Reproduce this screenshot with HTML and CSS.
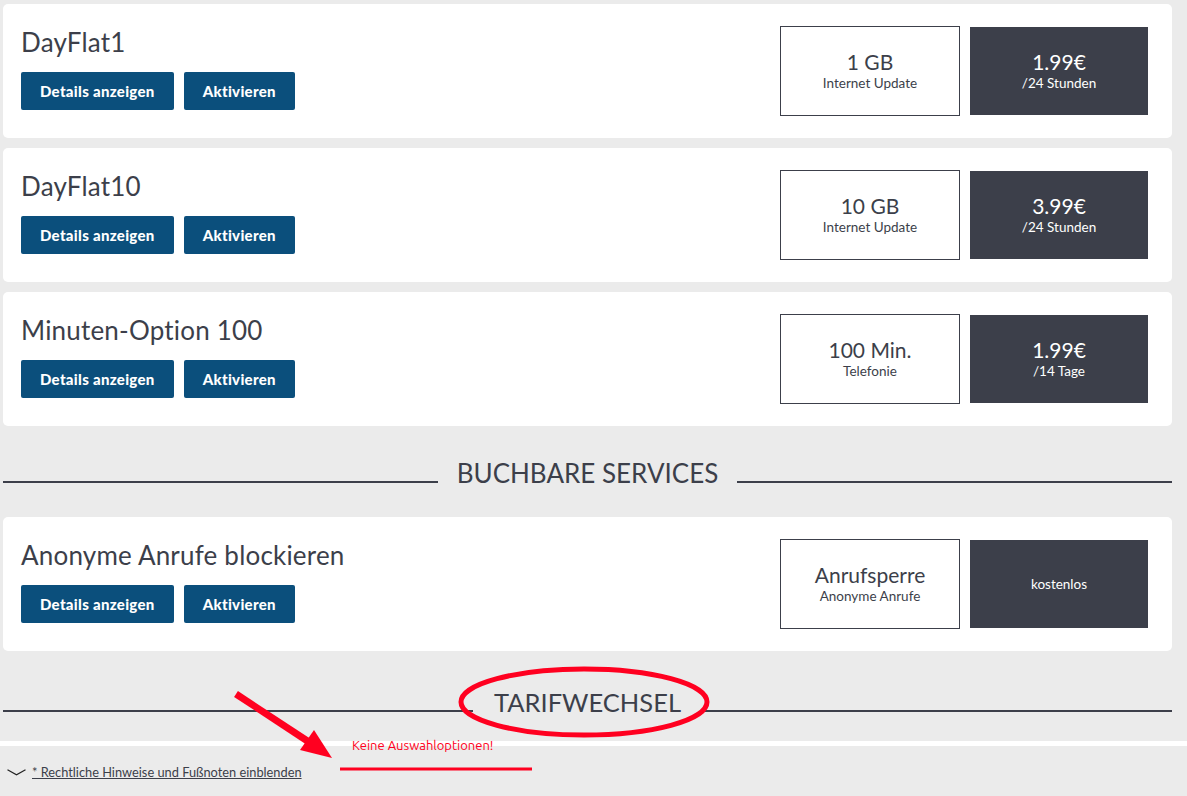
FILE: index.html
```html
<!DOCTYPE html>
<html lang="de">
<head>
<meta charset="utf-8">
<title>Optionen</title>
<link rel="stylesheet" href="styles.css">
</head>
<body>
<main class="page">
  <section class="list">
    <article class="card">
      <div class="card-main">
        <h2 class="card-title">DayFlat1</h2>
        <div class="actions"><button class="btn">Details anzeigen</button><button class="btn">Aktivieren</button></div>
      </div>
      <div class="boxes">
        <div class="box box-info"><span class="box-big">1 GB</span><span class="box-small">Internet Update</span></div>
        <div class="box box-price"><span class="box-big">1.99€</span><span class="box-small">/24 Stunden</span></div>
      </div>
    </article>
    <article class="card">
      <div class="card-main">
        <h2 class="card-title">DayFlat10</h2>
        <div class="actions"><button class="btn">Details anzeigen</button><button class="btn">Aktivieren</button></div>
      </div>
      <div class="boxes">
        <div class="box box-info"><span class="box-big">10 GB</span><span class="box-small">Internet Update</span></div>
        <div class="box box-price"><span class="box-big">3.99€</span><span class="box-small">/24 Stunden</span></div>
      </div>
    </article>
    <article class="card">
      <div class="card-main">
        <h2 class="card-title">Minuten-Option 100</h2>
        <div class="actions"><button class="btn">Details anzeigen</button><button class="btn">Aktivieren</button></div>
      </div>
      <div class="boxes">
        <div class="box box-info"><span class="box-big">100 Min.</span><span class="box-small">Telefonie</span></div>
        <div class="box box-price"><span class="box-big">1.99€</span><span class="box-small">/14 Tage</span></div>
      </div>
    </article>
  </section>

  <h2 class="divider divider-services"><span class="divider-line"></span><span class="divider-text">BUCHBARE SERVICES</span><span class="divider-line"></span></h2>

  <section class="list">
    <article class="card">
      <div class="card-main">
        <h2 class="card-title">Anonyme Anrufe blockieren</h2>
        <div class="actions"><button class="btn">Details anzeigen</button><button class="btn">Aktivieren</button></div>
      </div>
      <div class="boxes">
        <div class="box box-info"><span class="box-big">Anrufsperre</span><span class="box-small">Anonyme Anrufe</span></div>
        <div class="box box-price"><span class="box-small">kostenlos</span></div>
      </div>
    </article>
  </section>

  <h2 class="divider divider-tarif"><span class="divider-line"></span><span class="divider-text">TARIFWECHSEL</span><span class="divider-line"></span></h2>
</main>

<div class="strip"></div>

<footer class="footer">
  <svg class="chevron" width="19" height="7" viewBox="0 0 19 7"><polyline points="0.5,0.8 9.5,5.8 18.5,0.8" fill="none" stroke="#222" stroke-width="1.2"/></svg>
  <a class="legal-link" href="#">* Rechtliche Hinweise und Fußnoten einblenden</a>
</footer>

<svg class="annotation" width="1187" height="796" viewBox="0 0 1187 796">
  <ellipse cx="584" cy="702" rx="123" ry="33" fill="none" stroke="#ff0020" stroke-width="5"/>
  <line x1="236" y1="694" x2="312" y2="744" stroke="#ff0020" stroke-width="7"/>
  <polygon points="300,750 314,730 332,758" fill="#ff0020"/>
  <line x1="340" y1="769" x2="532" y2="769" stroke="#ff0020" stroke-width="3"/>
</svg>
<p class="annotation-text">Keine Auswahloptionen!</p>
</body>
</html>
```

FILE: styles.css
```css
* {
  box-sizing: border-box;
}

html, body {
  margin: 0;
  padding: 0;
}

body {
  background: #ebebeb;
  font-family: Lato, "Open Sans", sans-serif;
  color: #3c3f4a;
  width: 1187px;
  height: 796px;
  overflow: hidden;
  position: relative;
}

.page {
  margin-left: 3px;
  width: 1169px;
  padding-top: 4px;
}

.list {
  display: flex;
  flex-direction: column;
  gap: 10px;
}

.card {
  background: #fff;
  border-radius: 5px;
  height: 134px;
  padding: 23px 24px 28px 18px;
  display: flex;
  justify-content: space-between;
  align-items: center;
}

.card-main {
  display: flex;
  flex-direction: column;
  gap: 15px;
  align-self: flex-start;
}

.card-title {
  margin: 0;
  font-size: 26px;
  line-height: 30px;
  font-weight: 400;
  color: #3c3f4a;
  letter-spacing: 0.2px;
}

.actions {
  display: flex;
  gap: 10px;
}

.btn {
  height: 38px;
  padding: 0 19px;
  border: 0;
  border-radius: 2px;
  background: #0b4f7c;
  color: #fff;
  font-family: Lato, "Open Sans", sans-serif;
  font-weight: 900;
  font-size: 15px;
  letter-spacing: 0.3px;
}

.boxes {
  display: flex;
  align-items: center;
  gap: 10px;
  margin-top: 5px;
}

.box {
  display: flex;
  flex-direction: column;
  align-items: center;
  justify-content: center;
  text-align: center;
}

.box-info {
  width: 180px;
  height: 90px;
  border: 1px solid #3c3f4a;
  background: #fff;
  color: #3c3f4a;
}

.box-price {
  width: 178px;
  height: 88px;
  background: #3c3f4a;
  color: #fff;
}

.box-big {
  font-size: 21px;
  line-height: 24px;
}

.box-small {
  font-size: 13.5px;
  line-height: 18px;
}

.divider {
  margin: 0;
  display: flex;
  align-items: flex-end;
  height: 30px;
  font-weight: 400;
}

.divider-services {
  margin-top: 32px;
  margin-bottom: 29px;
}

.divider-tarif {
  margin-top: 36px;
  margin-bottom: 24px;
}

.divider-line {
  flex: 1;
  height: 2px;
  background: #3c3f4a;
  margin-bottom: 5px;
}

.divider-text {
  padding: 0 19px;
  font-size: 26px;
  line-height: 30px;
  color: #3c3f4a;
}

.divider-tarif .divider-text {
  font-size: 25.5px;
  padding: 0 21px;
}

.strip {
  height: 5px;
  background: #fff;
}

.footer {
  height: 50px;
  display: flex;
  align-items: center;
  gap: 6px;
  padding-left: 7px;
  padding-top: 2px;
}

.chevron {
  display: block;
}

.legal-link {
  font-size: 12.8px;
  color: #3c3f4a;
  text-decoration: underline;
}

.annotation {
  position: absolute;
  left: 0;
  top: 0;
  pointer-events: none;
}

.annotation-text {
  position: absolute;
  left: 352px;
  top: 737px;
  margin: 0;
  font-family: Ubuntu, "Open Sans", sans-serif;
  font-size: 13px;
  line-height: 17px;
  color: #ff0020;
}
```
